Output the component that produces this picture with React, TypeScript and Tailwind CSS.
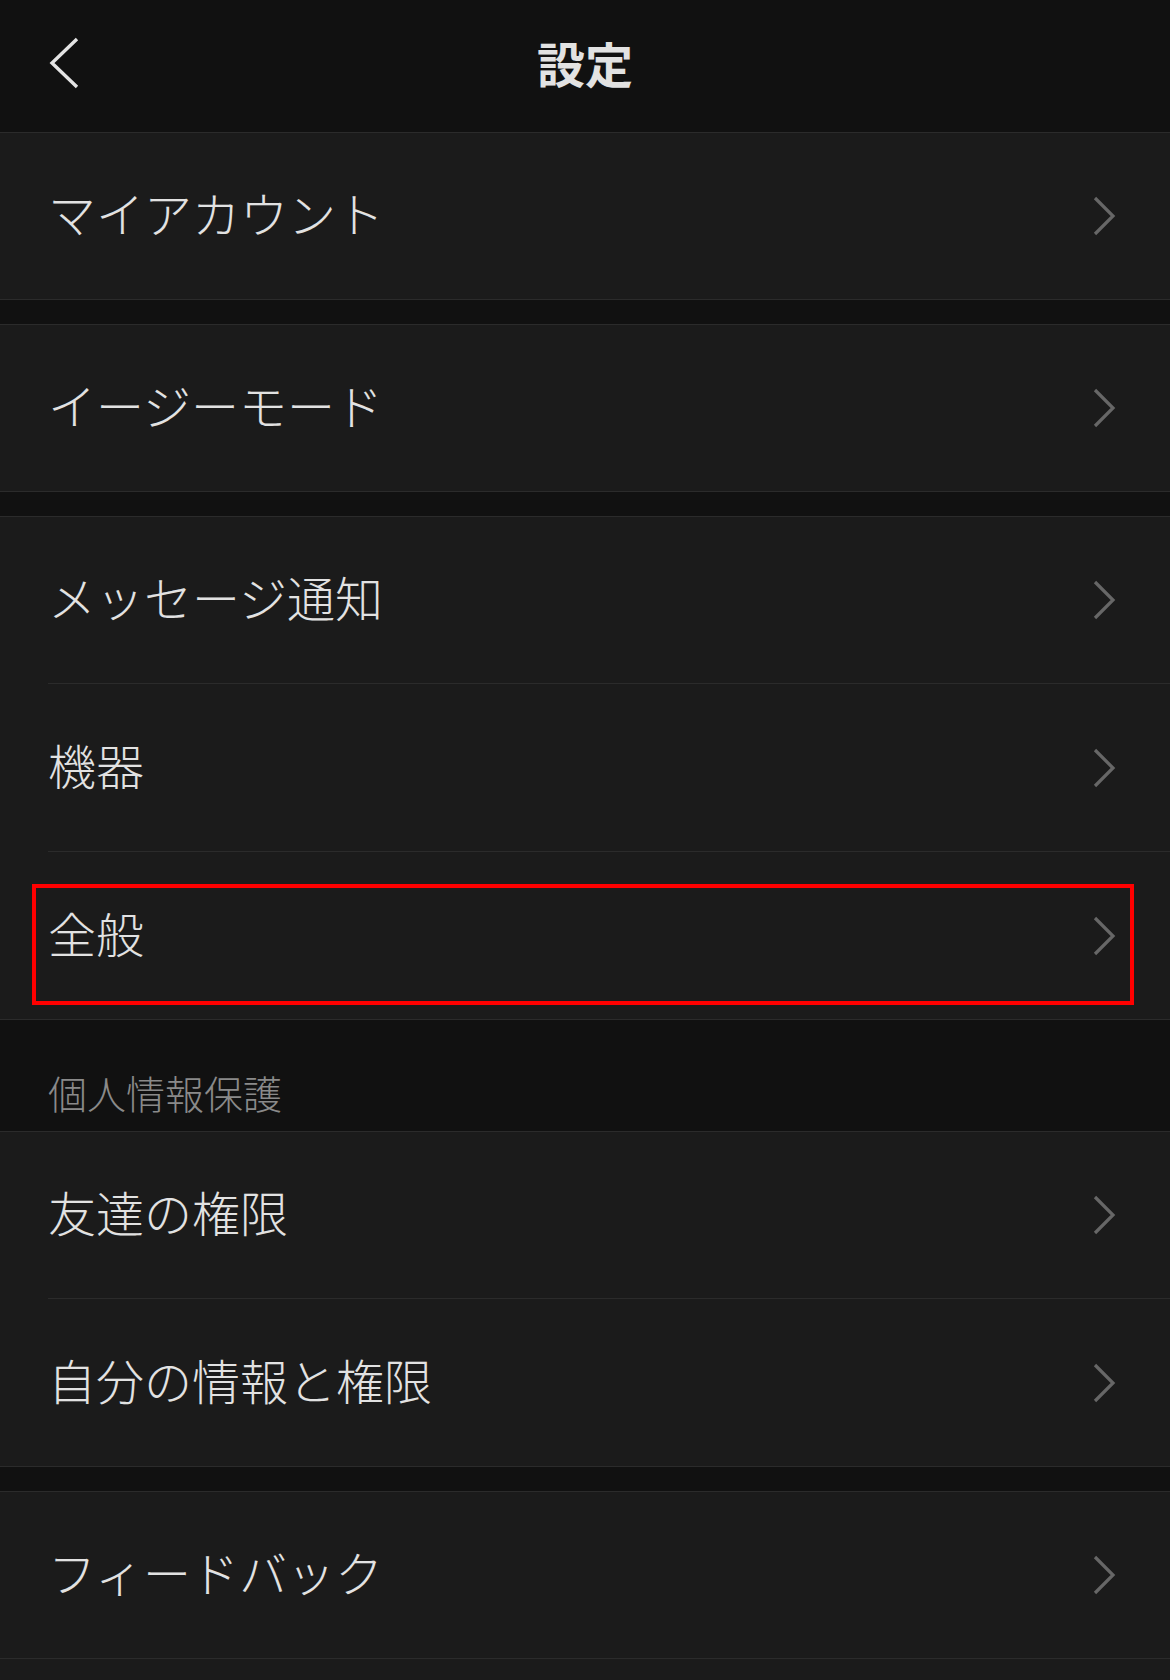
import React from 'react';

type Item = {
  label: string;
  highlight?: boolean;
};

// Groups of settings rows, in page order
const groups: { title?: string; items: Item[] }[] = [
  { items: [{ label: 'マイアカウント' }] },
  { items: [{ label: 'イージーモード' }] },
  {
    items: [
      { label: 'メッセージ通知' },
      { label: '機器' },
      { label: '全般', highlight: true },
    ],
  },
  {
    title: '個人情報保護',
    items: [{ label: '友達の権限' }, { label: '自分の情報と権限' }],
  },
  { items: [{ label: 'フィードバック' }] },
];

function ChevronRight() {
  return (
    <svg width="24" height="40" viewBox="0 0 24 40" fill="none">
      <path
        d="M3 2 L21 20 L3 38"
        stroke="#676767"
        strokeWidth="3.2"
        strokeLinecap="butt"
        strokeLinejoin="miter"
      />
    </svg>
  );
}

function Row({ item, first }: { item: Item; first: boolean }) {
  return (
    <div
      className={`relative flex items-center justify-between pl-[48px] pr-[54px] ${
        first ? 'h-[166px]' : 'h-[167px]'
      }`}
    >
      <span className="text-[48px] leading-none text-[#e2e2e2] font-light pb-[8px]">
        {item.label}
      </span>
      <ChevronRight />
      {/* Annotation box over the highlighted row */}
      {item.highlight && (
        <div className="absolute left-[32px] top-[32px] w-[1102px] h-[121px] border-4 border-[#ff0000]" />
      )}
    </div>
  );
}

export default function App() {
  return (
    <div
      className="h-[1680px] w-full overflow-hidden bg-[#111111] flex flex-col"
      style={{ fontFamily: '"Noto Sans CJK JP", "Noto Sans", sans-serif' }}
    >
      {/* Header */}
      <div className="relative h-[132px] shrink-0 flex items-center justify-center">
        <div className="absolute left-[49px] top-[37px]">
          <svg width="30" height="52" viewBox="0 0 30 52" fill="none">
            <path d="M28 2 L3 26 L28 50" stroke="#e4e4e4" strokeWidth="3.4" />
          </svg>
        </div>
        <h1 className="text-[48px] font-bold text-[#e2e2e2] leading-none pb-[8px]">
          設定
        </h1>
      </div>

      {groups.map((group, gi) => (
        <div key={gi} className="shrink-0">
          {group.title ? (
            <div className="h-[111px] flex items-end pl-[48px] pb-[16px]">
              <span className="text-[39px] leading-[46px] text-[#8a8a8a] font-light">
                {group.title}
              </span>
            </div>
          ) : (
            gi > 0 && <div className="h-[24px]" />
          )}
          <div className="bg-[#1b1b1b] border-y border-[#2b2b2b]">
            {group.items.map((item, i) => (
              <div key={item.label}>
                {i > 0 && <div className="ml-[48px] h-px bg-[#2b2b2b]" />}
                <Row item={item} first={i === 0} />
              </div>
            ))}
          </div>
        </div>
      ))}
      <div className="flex-1 bg-[#1b1b1b]" />
    </div>
  );
}
